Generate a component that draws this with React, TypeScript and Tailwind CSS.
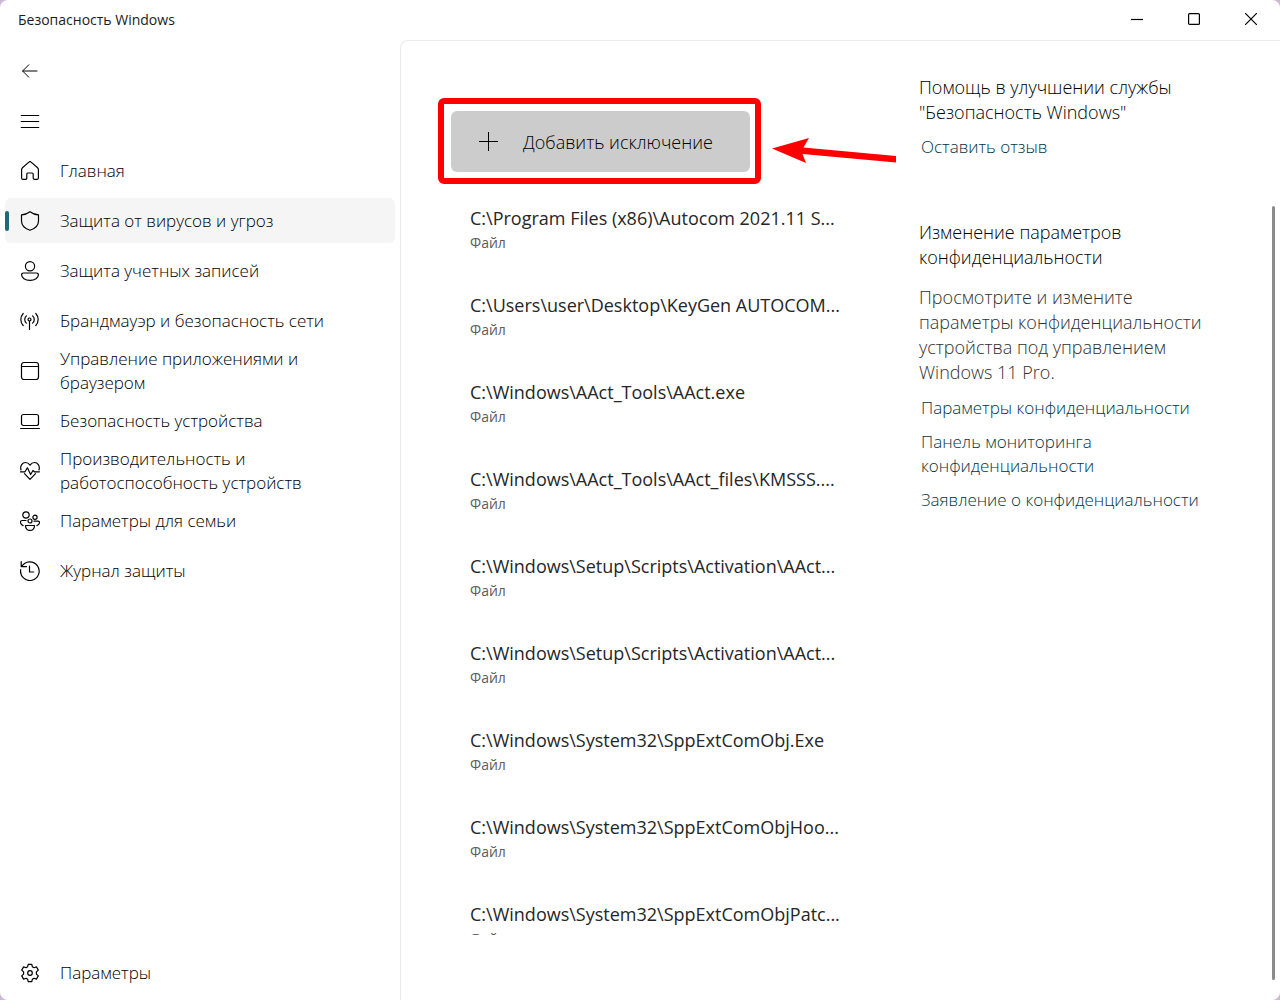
import type { ReactNode } from "react";

function Icon({ children }: { children: ReactNode }) {
  return (
    <svg
      viewBox="0 0 20 20"
      className="size-5 shrink-0"
      fill="none"
      stroke="currentColor"
      strokeWidth="1.2"
      strokeLinecap="round"
      strokeLinejoin="round"
      aria-hidden="true"
    >
      {children}
    </svg>
  );
}

const navItems = [
  {
    label: "Главная",
    icon: (
      <path d="M1.6 8.6c0-.7.3-1.3.8-1.8L8.9 1.1a1.6 1.6 0 0 1 2.2 0l6.5 5.7c.5.5.8 1.1.8 1.8v8.3a1.5 1.5 0 0 1-1.5 1.5h-2.2a1.5 1.5 0 0 1-1.5-1.5v-3.9a1 1 0 0 0-1-1H7.800a1 1 0 0 0-1 1v3.9a1.5 1.5 0 0 1-1.5 1.5H3.1a1.5 1.5 0 0 1-1.500-1.500z" />
    ),
  },
  {
    label: "Защита от вирусов и угроз",
    active: true,
    icon: <path d="M10 .8c2.4 1.9 5.3 2.9 8.5 3V10c0 4.3-3.2 7.5-8.5 9.300C4.700 17.500 1.500 14.300 1.500 10V3.800C4.700 3.700 7.600 2.700 10 .8z" />,
  },
  {
    label: "Защита учетных записей",
    icon: (
      <>
        <circle cx="10" cy="5.200" r="4.600" />
        <path d="M3.500 12h13a1.800 1.800 0 0 1 1.900 1.800c0 3-3.400 5.500-8.400 5.500s-8.400-2.500-8.400-5.500A1.800 1.800 0 0 1 3.500 12z" />
      </>
    ),
  },
  {
    label: "Брандмауэр и безопасность сети",
    icon: (
      <>
        <circle cx="9.500" cy="8.500" r="1.500" />
        <path d="M9.500 10.200V18.500M6.400 12.100a4.700 4.700 0 0 1 0-7.200M12.600 12.100a4.700 4.700 0 0 0 0-7.200M3.200 14.500a8.800 8.800 0 0 1 0-12M15.800 14.500a8.800 8.800 0 0 0 0-12" />
      </>
    ),
  },
  {
    label: "Управление приложениями и браузером",
    icon: (
      <>
        <rect x="1.500" y="1.500" width="17" height="17" rx="2.500" />
        <path d="M1.500 5.500h17" />
      </>
    ),
  },
  {
    label: "Безопасность устройства",
    icon: (
      <>
        <rect x="1.500" y="3.500" width="17" height="11" rx="2" />
        <path d="M.6 17.500h18.800" />
      </>
    ),
  },
  {
    label: "Производительность и работоспособность устройств",
    icon: (
      <>
        <path d="M1 9C-.2 4.500 2.500 1.500 5.500 1.500c2 0 3.300 1 4.500 2.700 1.200-1.700 2.500-2.700 4.500-2.700C17.500 1.500 20.200 4.500 19 9M4.500 12.700 10 18.300l5.500-5.600" />
        <path d="M.5 10.800H5L7.400 6.800l3.200 6.700 2.400-4 1.400 1.300h5" />
      </>
    ),
  },
  {
    label: "Параметры для семьи",
    icon: (
      <>
        <circle cx="6" cy="4" r="3.200" />
        <circle cx="15" cy="6.300" r="2.100" />
        <circle cx="10" cy="10" r="2" />
        <path d="M5.500 14.500h9c.1 2.900-1.800 4.900-4.500 4.900s-4.600-2-4.500-4.900zM6 9.500H2.200c-1.300 0-2 .8-1.700 2.200.3 1.300 1.100 2.300 2.600 2.900M14 10.200h3.900c1.200 0 1.800.7 1.500 1.900-.3 1.300-1.100 2.100-2.500 2.500" />
      </>
    ),
  },
  {
    label: "Журнал защиты",
    icon: (
      <>
        <path d="M.7 8.500A9.300 9.300 0 1 0 1.800 5.500M1.200.6v5h5.300" />
        <path d="M9.500 5v6h4.200" />
      </>
    ),
  },
];

const exclusions = [
  "C:\\Program Files (x86)\\Autocom 2021.11 S...",
  "C:\\Users\\user\\Desktop\\KeyGen AUTOCOM...",
  "C:\\Windows\\AAct_Tools\\AAct.exe",
  "C:\\Windows\\AAct_Tools\\AAct_files\\KMSSS....",
  "C:\\Windows\\Setup\\Scripts\\Activation\\AAct...",
  "C:\\Windows\\Setup\\Scripts\\Activation\\AAct...",
  "C:\\Windows\\System32\\SppExtComObj.Exe",
  "C:\\Windows\\System32\\SppExtComObjHoo...",
  "C:\\Windows\\System32\\SppExtComObjPatc...",
];

const privacyLinks = [
  "Параметры конфиденциальности",
  "Панель мониторинга конфиденциальности",
  "Заявление о конфиденциальности",
];

function TitleBar() {
  return (
    <header className="flex h-10 shrink-0 items-center justify-between pl-[18px]">
      <h1 className="text-sm font-normal text-[#1b1b1b]">Безопасность Windows</h1>
      <div className="flex h-full pb-[2px]">
        <button aria-label="Свернуть" className="flex w-[57px] items-center justify-center">
          <svg width="12" height="12" fill="none" stroke="currentColor" strokeWidth="1.2">
            <path d="M0 6.500h12" />
          </svg>
        </button>
        <button aria-label="Развернуть" className="flex w-[57px] items-center justify-center">
          <svg width="12" height="12" fill="none" stroke="currentColor" strokeWidth="1.2">
            <rect x=".6" y=".6" width="10.800" height="10.800" rx="1" />
          </svg>
        </button>
        <button aria-label="Закрыть" className="flex w-[58px] items-center justify-center">
          <svg width="12" height="12" fill="none" stroke="currentColor" strokeWidth="1.2">
            <path d="m0 0 12 12M12 0 0 12" />
          </svg>
        </button>
      </div>
    </header>
  );
}

function Sidebar() {
  return (
    <aside className="flex w-[400px] shrink-0 flex-col gap-[5px] px-[5px] pt-2 pb-[5px]">
      <button aria-label="Назад" className="flex h-[45px] w-[50px] items-center justify-center">
        <Icon>
          <path d="M17 10H2.800M8.800 3.800 2.600 10l6.200 6.200" strokeWidth="1" />
        </Icon>
      </button>
      <button aria-label="Меню" className="flex h-[45px] w-[50px] items-center justify-center">
        <Icon>
          <path d="M1.200 4.500h17.600M1.200 10.500h17.600M1.200 16.500h17.600" strokeWidth="1" />
        </Icon>
      </button>
      <nav className="flex flex-col gap-[5px]">
        {navItems.map((item) => (
          <a
            key={item.label}
            href="#"
            aria-current={item.active ? "page" : undefined}
            className={
              item.active
                ? "relative flex h-[45px] items-center gap-5 rounded-md bg-[#f5f5f5] pr-16 pl-[15px]"
                : "relative flex h-[45px] items-center gap-5 rounded-md pr-16 pl-[15px]"
            }
          >
            {item.active && <span className="absolute left-0 h-5 w-1 rounded-full bg-[#1d6a78]" />}
            <Icon>{item.icon}</Icon>
            <span className="pt-px text-[17px] leading-6">{item.label}</span>
          </a>
        ))}
      </nav>
      <a href="#" className="mt-auto flex h-[45px] items-center gap-5 pl-[15px]">
        <Icon>
          <circle cx="10" cy="10" r="2.300" />
          <path d="M8.200 1.300h3.600l.6 2.500 1.500.9 2.500-.8 1.900 3.200-1.900 1.800v2.200l1.900 1.800-1.900 3.200-2.500-.8-1.500.9-.6 2.500H8.200l-.6-2.500-1.500-.9-2.500.8-1.900-3.200 1.900-1.800V8.900L1.700 7.100l1.900-3.200 2.500.8 1.500-.9z" />
        </Icon>
        <span className="text-[17px] leading-6">Параметры</span>
      </a>
    </aside>
  );
}

function AddExclusion() {
  return (
    <div className="relative ml-[50px] w-[299px]">
      <button className="flex h-[61px] w-full items-center gap-6 rounded-md bg-[#cccccc] pl-7 text-lg">
        <svg width="20" height="20" fill="none" stroke="currentColor" aria-hidden="true">
          <path d="M0 9.500h19M9.500 0v19" />
        </svg>
        Добавить исключение
      </button>
      <div className="pointer-events-none absolute -top-[13px] -right-[11px] -bottom-3 -left-[13px] rounded-md border-6 border-[#ff0000]" />
      <svg
        className="pointer-events-none absolute top-6 left-[320px]"
        width="128"
        height="30"
        fill="#ff0000"
        aria-hidden="true"
      >
        <path d="m1 13.500 37-10.500-5.500 9.500 92.500 8.500v6.500l-93.500-8.500 3.500 9z" />
      </svg>
    </div>
  );
}

function HelpPanel() {
  return (
    <aside className="w-[300px] shrink-0 pt-[34px] text-lg">
      <h2 className="leading-[25px]">Помощь в улучшении службы "Безопасность Windows"</h2>
      <a href="#" className="mt-[10px] ml-[2px] block text-[17px] leading-6 text-[#003542]">
        Оставить отзыв
      </a>
      <h2 className="mt-[61px] pr-16 leading-[25px]">Изменение параметров конфиденциальности</h2>
      <p className="mt-[15px] leading-[25px] text-[#303030]">
        Просмотрите и измените параметры конфиденциальности устройства под управлением Windows 11 Pro.
      </p>
      <ul className="mt-[11px] ml-[2px] flex flex-col gap-[10px] text-[17px] leading-6 text-[#003542]">
        {privacyLinks.map((link) => (
          <li key={link}>
            <a href="#">{link}</a>
          </li>
        ))}
      </ul>
    </aside>
  );
}

export default function App() {
  return (
    <div className="h-screen bg-[#c9b9d2]">
      <div className="flex h-full flex-col overflow-hidden rounded-lg bg-white font-['Open_Sans',sans-serif] font-light text-black">
        <TitleBar />
        <div className="flex min-h-0 flex-1">
          <Sidebar />
          <main className="flex min-w-0 flex-1 rounded-tl-lg border-t border-l border-[#ebebeb]">
            <div className="mb-[65px] min-w-0 flex-1 overflow-hidden pt-[70px]">
              <AddExclusion />
              <ul className="mt-[34px] ml-[69px] flex flex-col gap-[38px] font-normal">
                {exclusions.map((path, i) => (
                  <li key={i}>
                    <p className="text-lg leading-[25px] whitespace-nowrap text-[#262626]">{path}</p>
                    <p className="text-sm leading-6 text-[#5c5c5c]">Файл</p>
                  </li>
                ))}
              </ul>
            </div>
            <HelpPanel />
            <div className="mt-[165px] mr-[5px] mb-5 ml-[53px] w-[3px] shrink-0 rounded-full bg-[#8b8b8b]" />
          </main>
        </div>
      </div>
    </div>
  );
}
